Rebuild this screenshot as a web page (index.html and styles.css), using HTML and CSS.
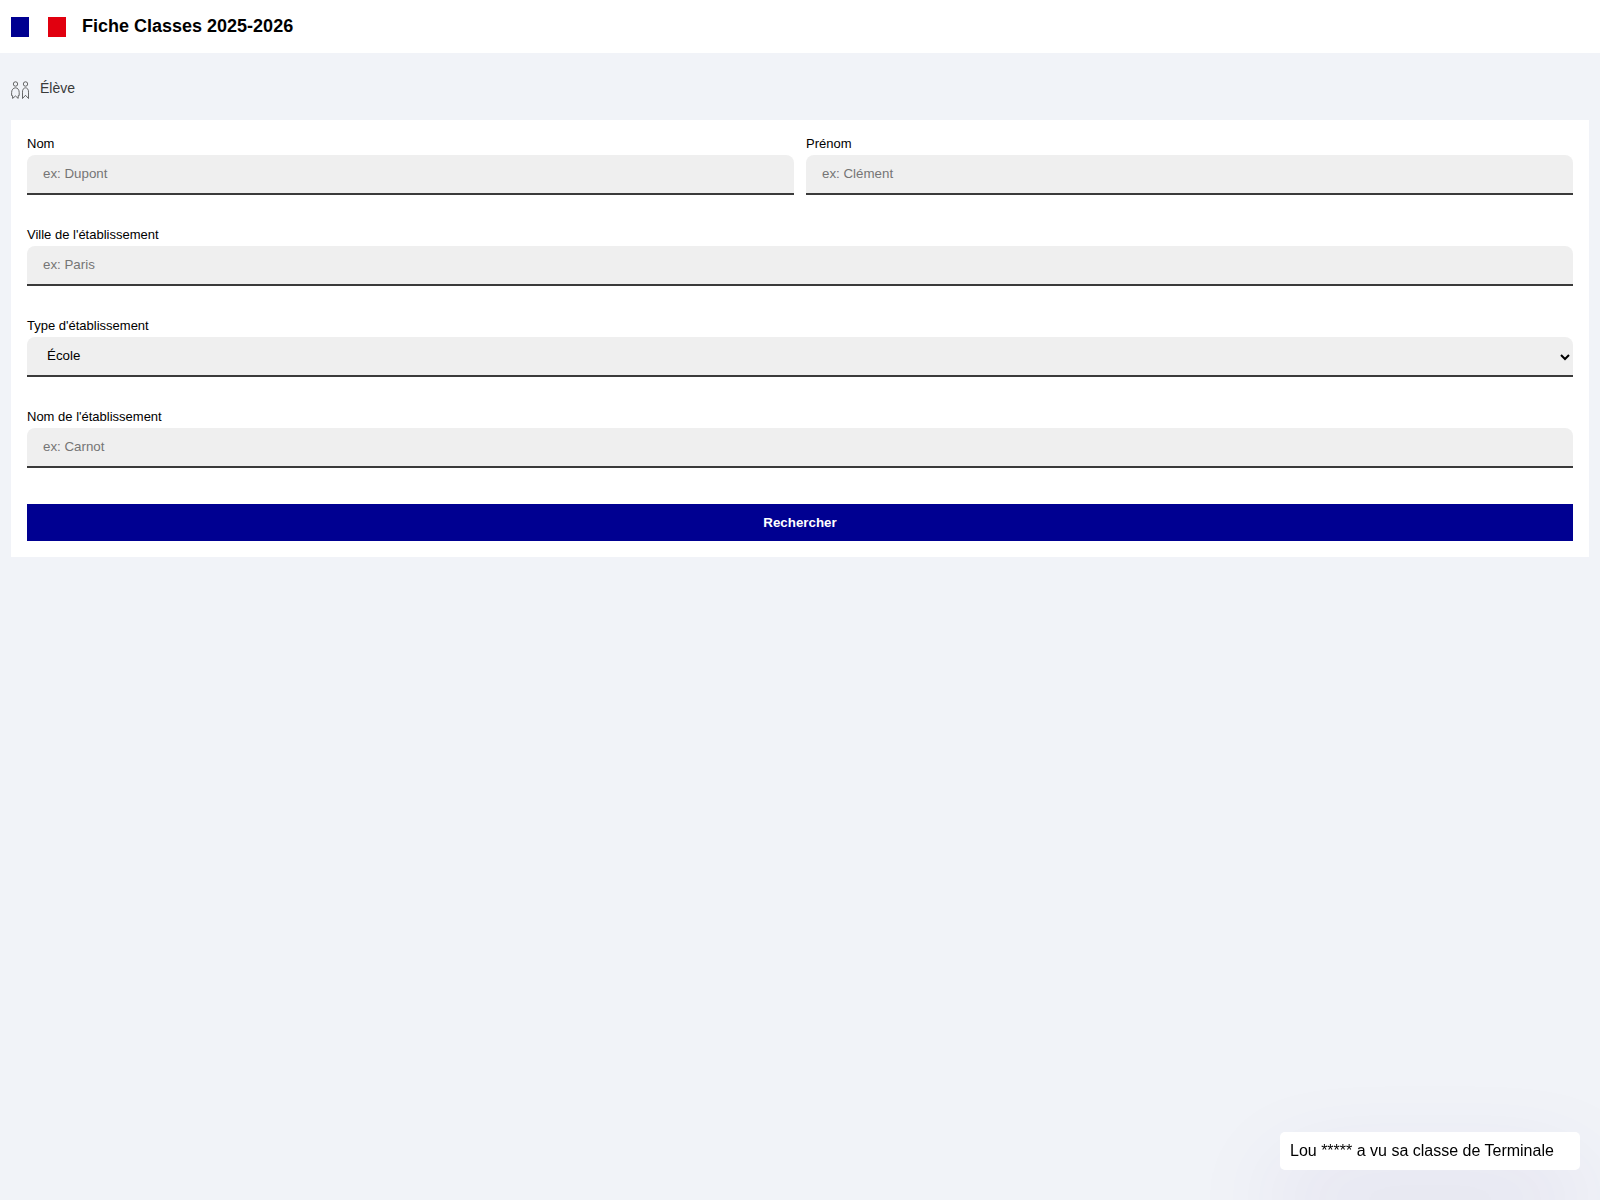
FILE: index.html
```html
<!DOCTYPE html>
<html lang="fr">
<head>
<meta charset="utf-8">
<meta name="viewport" content="width=device-width, initial-scale=1">
<title>Fiche Classes 2025-2026</title>
<link rel="stylesheet" href="styles.css">
</head>
<body>
<header class="header">
  <svg class="flag" viewBox="0 0 55 20" width="55" height="20" aria-hidden="true">
    <rect width="18" height="20" fill="#000091"/>
    <rect x="18" width="19" height="20" fill="#fff"/>
    <rect x="37" width="18" height="20" fill="#e1000f"/>
  </svg>
  <h1 class="title">Fiche Classes 2025-2026</h1>
</header>
<main class="main">
  <div class="section">
    <svg class="section-icon" viewBox="0 0 18 18" width="18" height="18" fill="none" stroke="#444" stroke-width=".8" aria-hidden="true">
      <circle cx="4.500" cy="3" r="2.200"/>
      <path d="M4.500 6.800C2.200 6.800.6 9 .6 11.500v3l1 .2v2.700l2.900-2.400 2.700 2.400v-2.700l1-.2v-3C8.200 9 6.800 6.800 4.500 6.800z"/>
      <circle cx="14.500" cy="3" r="2.200"/>
      <path d="M14.500 6.800c-2 0-3.200 2.100-3 4.400v6.300l3-3.200 3 3.200v-6.300c.2-2.300-1-4.400-3-4.400z"/>
    </svg>
    <h2 class="section-title">Élève</h2>
  </div>
  <form class="card">
    <div class="row">
      <div class="field">
        <label class="label" for="nom">Nom</label>
        <input class="control" id="nom" type="text" placeholder="ex: Dupont">
      </div>
      <div class="field">
        <label class="label" for="prenom">Prénom</label>
        <input class="control" id="prenom" type="text" placeholder="ex: Clément">
      </div>
    </div>
    <div class="field">
      <label class="label" for="ville">Ville de l'établissement</label>
      <input class="control" id="ville" type="text" placeholder="ex: Paris">
    </div>
    <div class="field">
      <label class="label" for="type">Type d'établissement</label>
      <select class="control" id="type">
        <option>École</option>
        <option>Collège</option>
        <option>Lycée</option>
      </select>
    </div>
    <div class="field">
      <label class="label" for="etablissement">Nom de l'établissement</label>
      <input class="control" id="etablissement" type="text" placeholder="ex: Carnot">
    </div>
    <button class="submit" type="button">Rechercher</button>
  </form>
</main>
<div class="toast" role="status">Lou ***** a vu sa classe de Terminale</div>
</body>
</html>
```

FILE: styles.css
```css
* {
  box-sizing: border-box;
}

body {
  margin: 0;
  min-height: 100vh;
  background: #f1f3f8;
  color: #000;
  font-family: "Liberation Sans", Arial, sans-serif;
}

.header {
  display: flex;
  align-items: center;
  gap: 16px;
  padding: 16px 11px;
  background: #fff;
}

.title {
  margin: 0;
  font-size: 18px;
  line-height: 21px;
}

.main {
  padding: 24px 11px;
}

.section {
  display: flex;
  align-items: center;
  gap: 11px;
  margin-bottom: 21px;
}

.section-icon {
  margin-top: 3px;
}

.section-title {
  margin: 0;
  color: #3a3a3a;
  font-size: 14px;
  font-weight: 400;
  line-height: 22px;
}

.card {
  display: flex;
  flex-direction: column;
  gap: 32px;
  padding: 16px;
  background: #fff;
}

.row {
  display: grid;
  grid-template-columns: 1fr 1fr;
  gap: 12px;
}

.field {
  display: flex;
  flex-direction: column;
}

.label {
  padding-bottom: 4px;
  font-size: 13px;
  line-height: 15px;
}

/* Controls keep the browser's own text size. */
.control {
  width: 100%;
  height: 40px;
  padding: 0 16px 2px;
  border: 0;
  border-bottom: 2px solid #3a3a3a;
  border-radius: 8px 8px 0 0;
  background-color: #efefef;
  color: #000;
  font-family: inherit;
}

.control::placeholder {
  color: #757575;
}

.submit {
  height: 37px;
  margin-top: 4px;
  border: 0;
  background: #000091;
  color: #fff;
  font-family: inherit;
  font-weight: 700;
}

.toast {
  position: fixed;
  right: 20px;
  bottom: 30px;
  width: 300px;
  padding: 10px;
  border-radius: 5px;
  background: #fff;
  box-shadow: 0 48px 100px 0 rgba(60, 30, 130, 0.15);
  font-size: 16px;
  line-height: 18px;
}
```
